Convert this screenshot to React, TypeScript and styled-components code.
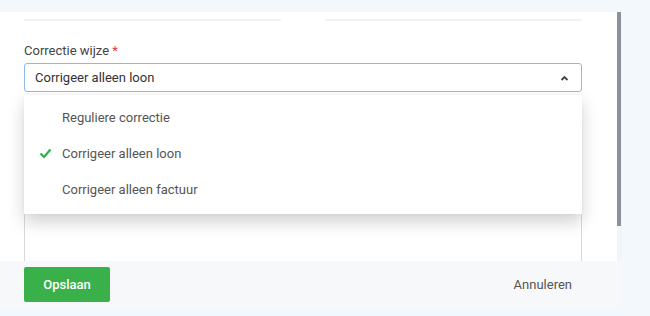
import * as React from 'react';
import styled, { createGlobalStyle } from 'styled-components';

const Global = createGlobalStyle`
  html, body {
    margin: 0;
    padding: 0;
    background: #f3f8fd;
    font-family: Roboto, 'Liberation Sans', sans-serif;
  }
`;

const Page = styled.div`
  width: 650px;
  height: 316px;
  padding-top: 12px;
  box-sizing: border-box;
  overflow: hidden;
`;

const Dialog = styled.div`
  width: 622px;
  display: flex;
  flex-direction: column;
`;

const Body = styled.div`
  height: 249px;
  display: flex;
  background: #fff;
  overflow: hidden;
`;

const Content = styled.div`
  flex: 1;
  padding: 7px 35px 0 24px;
  display: flex;
  flex-direction: column;
`;

const Rules = styled.div`
  display: flex;
  gap: 44px;
`;

const Rule = styled.div`
  flex: 1;
  height: 2px;
  background: #f0f2f4;
`;

const Label = styled.label`
  margin-top: 22px;
  font-size: 13px;
  line-height: 16px;
  color: #444;
  span {
    color: #e0393e;
  }
`;

const Field = styled.div`
  position: relative;
  margin-top: 4px;
`;

const Select = styled.div`
  height: 29px;
  box-sizing: border-box;
  border: 1px solid #8fb9e6;
  border-radius: 3px;
  display: flex;
  align-items: center;
  justify-content: space-between;
  padding: 0 12px 0 10px;
  font-size: 13px;
  color: #333;
`;

const Menu = styled.ul`
  position: absolute;
  left: 0;
  right: 0;
  top: 32px;
  margin: 0;
  padding: 4px 0 7px;
  list-style: none;
  background: #fff;
  box-shadow: 0 8px 16px rgba(0, 0, 0, 0.18), 0 0 2px rgba(0, 0, 0, 0.06);
  z-index: 2;
`;

const Item = styled.li`
  height: 36px;
  display: flex;
  align-items: center;
  padding-left: 15px;
  font-size: 13px;
  color: #555;
`;

const CheckSlot = styled.span`
  width: 23px;
  display: flex;
  align-items: center;
`;

const TextArea = styled.div`
  flex-shrink: 0;
  margin-top: 14px;
  height: 200px;
  border: 1px solid #d6d9dd;
  border-radius: 3px;
`;

const Scrollbar = styled.div`
  width: 5px;
  background: #f2f4f6;
  display: flex;
  flex-direction: column;
`;

const Thumb = styled.div`
  height: 214px;
  width: 4px;
  background: #8a9199;
`;

const Footer = styled.div`
  height: 47px;
  background: #f7f8fa;
  display: flex;
  align-items: center;
  justify-content: space-between;
  padding: 0 50px 0 24px;
`;

const Primary = styled.button`
  width: 86px;
  height: 35px;
  border: none;
  border-radius: 2px;
  background: #39b04a;
  color: #fff;
  font-family: Roboto, 'Liberation Sans', sans-serif;
  font-size: 13px;
  font-weight: 500;
`;

const Link = styled.button`
  border: none;
  background: none;
  padding: 0;
  font-family: Roboto, 'Liberation Sans', sans-serif;
  font-size: 13px;
  color: #555;
`;

const options = ['Reguliere correctie', 'Corrigeer alleen loon', 'Corrigeer alleen factuur'];

const App = () => {
  const selected = 'Corrigeer alleen loon';
  return (
    <Page>
      <Global />
      <Dialog>
        <Body>
          <Content>
            <Rules>
              <Rule />
              <Rule />
            </Rules>
            <Label>
              Correctie wijze <span>*</span>
            </Label>
            <Field>
              <Select>
                {selected}
                <svg width="9" height="6" viewBox="0 0 9 6">
                  <path d="M1.5 5 L4.5 2 L7.5 5" fill="none" stroke="#444" strokeWidth="1.8" />
                </svg>
              </Select>
              <Menu>
                {options.map((o) => (
                  <Item key={o}>
                    <CheckSlot>
                      {o === selected && (
                        <svg width="13" height="11" viewBox="0 0 13 11">
                          <path d="M1.5 5.5 L5 9 L11.5 1.5" fill="none" stroke="#2fae49" strokeWidth="2.2" />
                        </svg>
                      )}
                    </CheckSlot>
                    {o}
                  </Item>
                ))}
              </Menu>
            </Field>
            <TextArea />
          </Content>
          <Scrollbar>
            <Thumb />
          </Scrollbar>
        </Body>
        <Footer>
          <Primary>Opslaan</Primary>
          <Link>Annuleren</Link>
        </Footer>
      </Dialog>
    </Page>
  );
};

export default App;
